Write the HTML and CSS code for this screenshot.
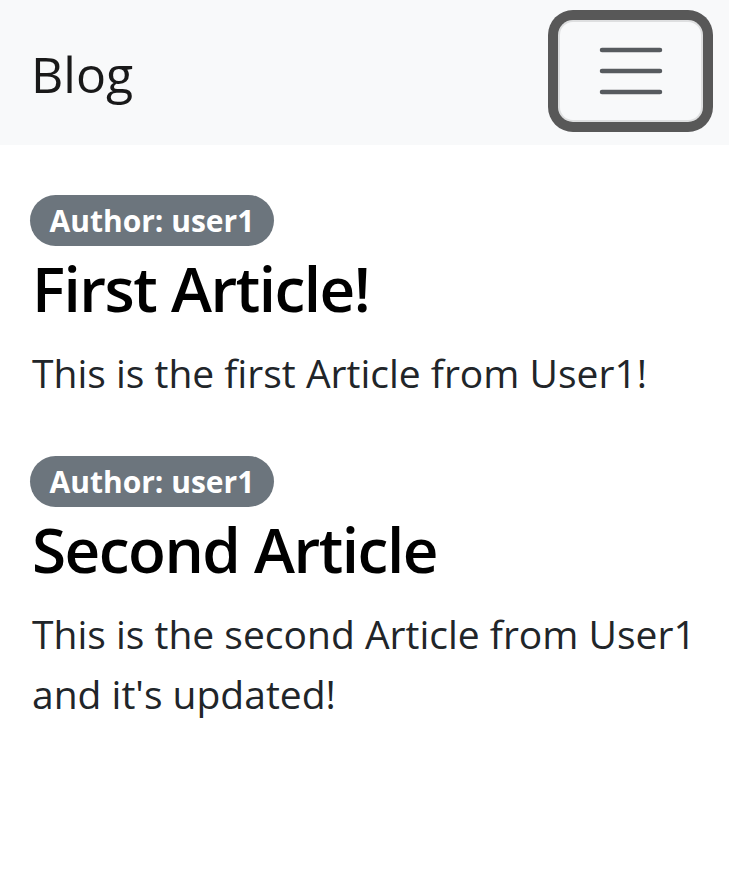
FILE: index.html
```html
<!DOCTYPE html>
<html lang="en">
<head>
<meta charset="utf-8">
<title>Blog</title>
<link rel="stylesheet" href="styles.css">
</head>
<body>
<nav class="navbar">
  <a class="brand" href="#">Blog</a>
  <button class="toggler" type="button" aria-label="Toggle navigation">
    <svg class="toggler-icon" width="66" height="50" viewBox="0 0 66 50" aria-hidden="true">
      <path d="M4 4H62M4 25H62M4 46H62" stroke="#575b5f" stroke-width="4.5" stroke-linecap="round" fill="none"/>
    </svg>
  </button>
</nav>
<main class="content">
  <article class="post">
    <div class="meta"><span class="badge">Author: user1</span></div>
    <h2 class="title">First Article!</h2>
    <p class="body">This is the first Article from User1!</p>
  </article>
  <article class="post">
    <div class="meta"><span class="badge">Author: user1</span></div>
    <h2 class="title">Second Article</h2>
    <p class="body">This is the second Article from User1 and it's updated!</p>
  </article>
</main>
</body>
</html>
```
FILE: styles.css
```css
* { box-sizing: border-box; }
body {
  margin: 0;
  font-family: "Open Sans", "Noto Sans", sans-serif;
  color: #212529;
  background: #fff;
}
.navbar {
  background: #f8f9fa;
  height: 145px;
  padding: 0 26px 0 31px;
  display: flex;
  align-items: center;
  justify-content: space-between;
}
.brand {
  font-size: 50px;
  color: rgba(0,0,0,.9);
  text-decoration: none;
  line-height: 1;
  padding-top: 2px;
}
.toggler {
  width: 145px;
  height: 102px;
  margin-top: -3px;
  background: transparent;
  border: 2.5px solid rgba(0,0,0,.1);
  border-radius: 15px;
  box-shadow: 0 0 0 10px #585858;
  display: flex;
  align-items: center;
  justify-content: center;
  padding: 0;
}
.toggler-icon { display: block; }
.content {
  padding: 50px 10px 0 30px;
  display: flex;
  flex-direction: column;
  gap: 53px;
}
.meta { display: flex; }
.badge {
  background: #6c757d;
  color: #fff;
  font-weight: 700;
  font-size: 30px;
  line-height: 1;
  padding: 10.5px 19.5px;
  border-radius: 999px;
}
.title {
  font-size: 62px;
  font-weight: 600;
  letter-spacing: -1.5px;
  line-height: 77px;
  margin: 0 0 16px;
  padding: 4px 0 0 2px;
  color: #000;
}
.body {
  font-size: 39px;
  line-height: 60px;
  margin: 0;
  padding-left: 2px;
}
```
